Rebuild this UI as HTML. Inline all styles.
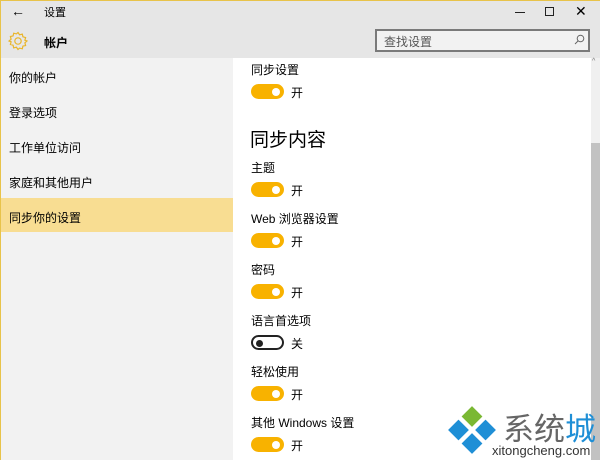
<!DOCTYPE html>
<html><head><meta charset="utf-8"><style>
*{margin:0;padding:0;box-sizing:border-box}
body{width:600px;height:460px;overflow:hidden;background:#fff;font-family:"Liberation Sans","Noto Sans CJK SC",sans-serif;color:#000;position:relative}
.a{position:absolute}
.t{font-size:12px;white-space:nowrap}
.tg{position:absolute;left:251px;width:33px;height:15px;border-radius:8px;background:#f8b200}
.tg::after{content:"";position:absolute;right:4px;top:3.5px;width:8px;height:8px;border-radius:50%;background:#fff}
.off{background:#fff;border:2px solid #222}
.off::after{left:3px;top:2.5px;right:auto;background:#222;width:7px;height:7px}
.on{position:absolute;left:291px;font-size:12px}
</style></head><body>
<div class="a" style="left:0;top:0;width:600px;height:58px;background:#e6e6e6"></div>
<div class="a" style="left:0;top:0;width:600px;height:1px;background:#e8c34a"></div>
<div class="a" style="left:0;top:0;width:1px;height:460px;background:#e8c34a"></div>
<div class="a t" style="left:11px;top:3px;font-size:14px">&#8592;</div>
<div class="a t" style="left:44px;top:4px;font-size:11px">设置</div>
<svg class="a" style="left:8px;top:31px" width="20" height="20" viewBox="0 0 20 20"><path d="M10 1.5l1.6 2.3 2.7-.7.6 2.7 2.7.7-.7 2.7L19 10l-2.1 1.8.7 2.7-2.7.6-.6 2.7-2.7-.7L10 18.5l-1.6-2.3-2.7.7-.6-2.7-2.7-.7.7-2.7L1 10l2.1-1.8-.7-2.7 2.7-.6.6-2.7 2.7.7z" fill="none" stroke="#e9b52a" stroke-width="1.2"/><circle cx="10" cy="10" r="3.2" fill="none" stroke="#e9b52a" stroke-width="1.2"/></svg>
<div class="a t" style="left:44px;top:34px;font-weight:bold">帐户</div>
<div class="a" style="left:515px;top:12px;width:10px;height:1px;background:#222"></div>
<div class="a" style="left:545px;top:7px;width:9px;height:9px;border:1px solid #222"></div>
<div class="a t" style="left:575px;top:3px;font-size:14px">✕</div>
<div class="a" style="left:375px;top:29px;width:215px;height:23px;border:2px solid #7a7a7a;background:#f2f2f2"></div>
<div class="a t" style="left:384px;top:33px;color:#555">查找设置</div>
<svg class="a" style="left:574px;top:34px" width="11" height="11"><circle cx="6.5" cy="4.5" r="3.3" fill="none" stroke="#666"/><path d="M4 7L1 10" stroke="#666"/></svg>
<div class="a" style="left:1px;top:58px;width:232px;height:402px;background:#f2f2f2"></div>
<div class="a" style="left:1px;top:198px;width:232px;height:34px;background:#f8dd92"></div>
<div class="a t" style="left:9px;top:69px">你的帐户</div>
<div class="a t" style="left:9px;top:104px">登录选项</div>
<div class="a t" style="left:9px;top:139px">工作单位访问</div>
<div class="a t" style="left:9px;top:174px">家庭和其他用户</div>
<div class="a t" style="left:9px;top:209px">同步你的设置</div>
<div class="a" style="left:591px;top:58px;width:9px;height:402px;background:#f0f0f0"></div>
<div class="a" style="left:591px;top:143px;width:9px;height:317px;background:#c2c2c2"></div>
<div class="a t" style="left:592px;top:58px;font-size:7px;color:#777">^</div>
<div class="a t" style="left:251px;top:61px">同步设置</div>
<div class="tg" style="top:84px"></div><div class="on" style="top:84px">开</div>
<div class="a t" style="left:250px;top:125px;font-size:19px">同步内容</div>
<div class="a t" style="left:251px;top:159px">主题</div>
<div class="tg" style="top:182px"></div><div class="on" style="top:182px">开</div>
<div class="a t" style="left:251px;top:210px">Web 浏览器设置</div>
<div class="tg" style="top:233px"></div><div class="on" style="top:233px">开</div>
<div class="a t" style="left:251px;top:261px">密码</div>
<div class="tg" style="top:284px"></div><div class="on" style="top:284px">开</div>
<div class="a t" style="left:251px;top:312px">语言首选项</div>
<div class="tg off" style="top:335px"></div><div class="on" style="top:335px">关</div>
<div class="a t" style="left:251px;top:363px">轻松使用</div>
<div class="tg" style="top:386px"></div><div class="on" style="top:386px">开</div>
<div class="a t" style="left:251px;top:414px">其他 Windows 设置</div>
<div class="tg" style="top:437px"></div><div class="on" style="top:437px">开</div>
<svg class="a" style="left:446px;top:404px" width="52" height="52" viewBox="0 0 50 50"><path d="M25 2l10 10-10 10-10-10z" fill="#7ab833"/><path d="M12 15l10 10-10 10L2 25z" fill="#1f8fd6"/><path d="M38 15l10 10-10 10-10-10z" fill="#1f8fd6"/><path d="M25 28l10 10-10 10-10-10z" fill="#1f8fd6"/></svg>
<div class="a t" style="left:503px;top:404px;font-size:31px;color:#666">系统<span style="color:#1f8fd6">城</span></div>
<div class="a t" style="left:492px;top:443px;font-size:13px;color:#333">xitongcheng.com</div>
</body></html>
